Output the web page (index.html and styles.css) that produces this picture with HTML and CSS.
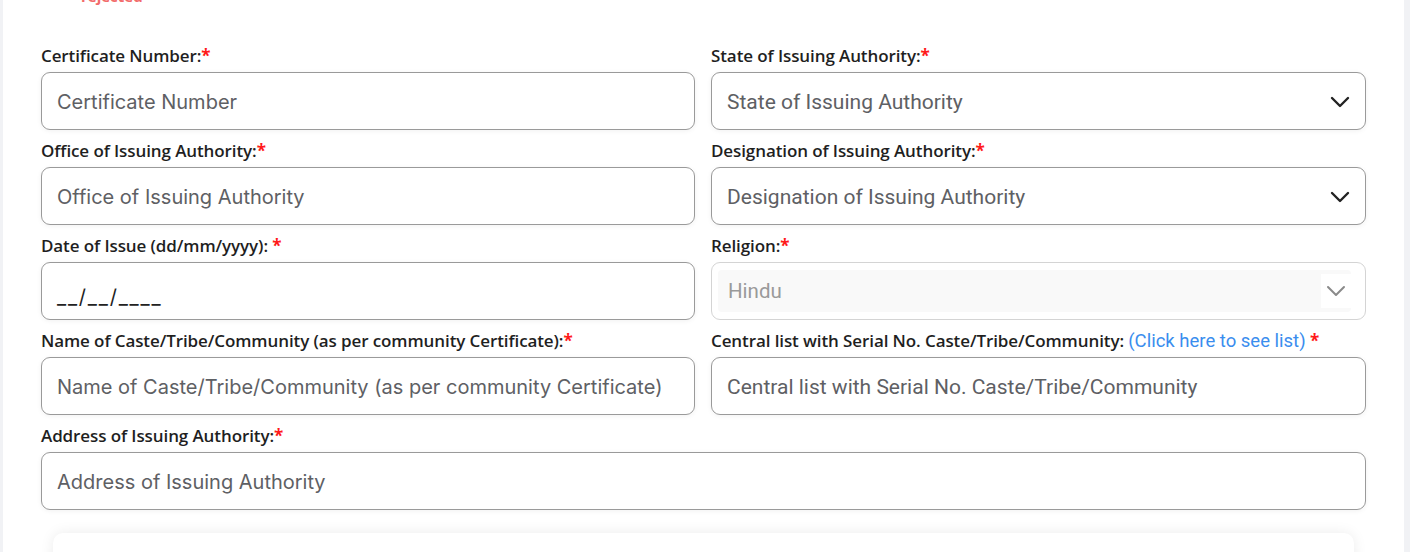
FILE: index.html
```html
<!DOCTYPE html>
<html>
<head>
<meta charset="utf-8">
<link rel="stylesheet" href="styles.css">
</head>
<body>
<div class="page">
  <div class="card">
    <div class="status">rejected</div>
    <form class="grid">
      <div class="field">
        <label class="lbl">Certificate Number:<span class="req">*</span></label>
        <div class="input"><span class="ph">Certificate Number</span></div>
      </div>
      <div class="field">
        <label class="lbl">State of Issuing Authority:<span class="req">*</span></label>
        <div class="input select alt"><span class="ph">State of Issuing Authority</span>
          <svg class="chev" viewBox="0 0 20 12" width="20" height="12"><path d="M2 2 L10 10 L18 2" fill="none" stroke="#222" stroke-width="2.4" stroke-linecap="round" stroke-linejoin="round"/></svg>
        </div>
      </div>
      <div class="field">
        <label class="lbl">Office of Issuing Authority:<span class="req">*</span></label>
        <div class="input"><span class="ph">Office of Issuing Authority</span></div>
      </div>
      <div class="field">
        <label class="lbl">Designation of Issuing Authority:<span class="req">*</span></label>
        <div class="input select alt"><span class="ph">Designation of Issuing Authority</span>
          <svg class="chev" viewBox="0 0 20 12" width="20" height="12"><path d="M2 2 L10 10 L18 2" fill="none" stroke="#222" stroke-width="2.4" stroke-linecap="round" stroke-linejoin="round"/></svg>
        </div>
      </div>
      <div class="field">
        <label class="lbl">Date of Issue (dd/mm/yyyy): <span class="req">*</span></label>
        <div class="input"><span class="val">__/__/____</span></div>
      </div>
      <div class="field">
        <label class="lbl">Religion:<span class="req">*</span></label>
        <div class="input disabled">
          <div class="dis-inner"><span class="dis-val">Hindu</span>
            <span class="dis-icon"><svg viewBox="0 0 20 12" width="20" height="12"><path d="M2 2 L10 10 L18 2" fill="none" stroke="#8a8a8a" stroke-width="2" stroke-linecap="round" stroke-linejoin="round"/></svg></span>
          </div>
        </div>
      </div>
      <div class="field">
        <label class="lbl">Name of Caste/Tribe/Community (as per community Certificate):<span class="req">*</span></label>
        <div class="input"><span class="ph">Name of Caste/Tribe/Community (as per community Certificate)</span></div>
      </div>
      <div class="field">
        <label class="lbl">Central list with Serial No. Caste/Tribe/Community: <a class="link">(Click here to see list)</a> <span class="req">*</span></label>
        <div class="input alt"><span class="ph">Central list with Serial No. Caste/Tribe/Community</span></div>
      </div>
      <div class="field wide">
        <label class="lbl">Address of Issuing Authority:<span class="req">*</span></label>
        <div class="input"><span class="ph">Address of Issuing Authority</span></div>
      </div>
    </form>
    <div class="subcard"></div>
  </div>
</div>
</body>
</html>
```
FILE: styles.css
```css
html, body {
  margin: 0;
  padding: 0;
  height: 100%;
  overflow: hidden;
}
body {
  background: #f1f2f5;
  font-family: "Inter", "Noto Sans", sans-serif;
}
.page {
  padding: 0 6px 0 3px;
  height: 100%;
}
.card {
  background: #ffffff;
  height: 100%;
  padding: 0 38px;
  overflow: hidden;
}
.status {
  margin-top: -14px;
  height: 20px;
  line-height: 20px;
  padding-left: 40px;
  font-family: "Open Sans", sans-serif;
  font-weight: 700;
  font-size: 15px;
  color: #f26b6b;
  margin-bottom: 40px;
}
.grid {
  display: grid;
  grid-template-columns: 654px 655px;
  column-gap: 16px;
  row-gap: 11px;
  margin: 0;
}
.field {
  display: flex;
  flex-direction: column;
}
.field.wide {
  grid-column: 1 / 3;
}
.lbl {
  height: 20px;
  line-height: 20px;
  margin-bottom: 6px;
  font-family: "Open Sans", sans-serif;
  font-weight: 600;
  font-size: 17px;
  color: #1f1f1f;
  white-space: nowrap;
  letter-spacing: -0.1px;
}
.req {
  color: #ff1a1a;
  font-weight: 700;
}
.link {
  color: #3a8dee;
  font-family: "Roboto", sans-serif;
  font-weight: 400;
  font-size: 18.5px;
  letter-spacing: 0;
}
.input {
  box-sizing: border-box;
  height: 58px;
  border: 1px solid #9a9a9a;
  border-radius: 9px;
  background: #fff;
  box-shadow: 0 1px 5px rgba(0,0,0,0.06);
  display: flex;
  align-items: center;
  padding: 1px 15px 0;
  font-size: 20px;
  position: relative;
}
.ph {
  color: #5e6064;
  white-space: nowrap;
}
.alt .ph {
  font-family: "Roboto", sans-serif;
  font-size: 21px;
}
.select {
  justify-content: space-between;
}
.val {
  color: #222;
  font-size: 20px;
  padding-top: 10px;
  letter-spacing: 1.8px;
}
.disabled {
  border-color: #d4d4d4;
  padding: 0 14px 0 6px;
  box-shadow: none;
}
.dis-inner {
  flex: 1;
  height: 42px;
  background: #f9f9f9;
  border-radius: 4px;
  display: flex;
  align-items: center;
  justify-content: space-between;
  padding-left: 10px;
}
.dis-val {
  color: #9a9a9a;
  font-family: "Roboto", sans-serif;
  font-size: 20.5px;
}
.dis-icon {
  width: 30px;
  height: 34px;
  background: #fff;
  display: flex;
  align-items: center;
  justify-content: center;
}
.subcard {
  margin: 23px 12px 0;
  height: 120px;
  background: #fff;
  border-radius: 10px;
  box-shadow: 0 0 14px rgba(0,0,0,0.08);
}
```
